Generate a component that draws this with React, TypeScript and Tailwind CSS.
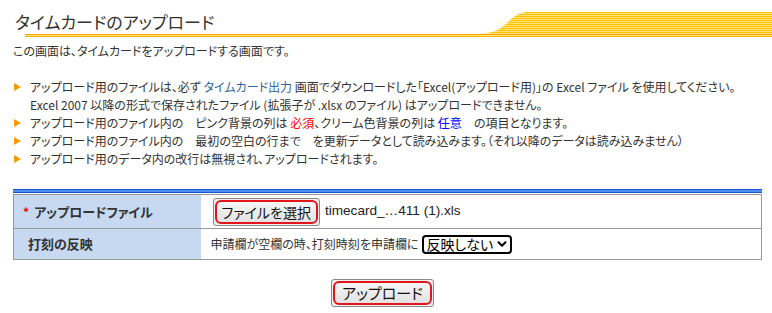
import React from "react";
import { ChevronDown } from "lucide-react";

const jp = "font-['MS_UI_Gothic','Noto_Sans_CJK_JP',sans-serif] [font-feature-settings:'palt']";

// Header band drawn on the right side of the title
function HeaderBand() {
  return (
    <svg className="absolute left-[12px] top-0" width="750" height="37" viewBox="0 0 750 37">
      <defs>
        <pattern id="stripe" width="4" height="2" patternUnits="userSpaceOnUse">
          <rect x="0" y="0" width="4" height="1" fill="#ffc000" />
          <rect x="0" y="1" width="4" height="1" fill="#ffe27a" />
        </pattern>
      </defs>
      <path d="M0,34 L452,34 C468,34 476,29 484,21 C491,14 497,12 504,12 L750,12 L750,37 L0,37 Z" fill="url(#stripe)" />
      <rect x="0" y="34" width="750" height="1" fill="#ffa200" />
      <rect x="0" y="36" width="750" height="1" fill="#ffb000" />
    </svg>
  );
}

function Bullet() {
  return (
    <span className="absolute left-[-16px] top-[5px] w-0 h-0 border-y-[4px] border-y-transparent border-l-[7px] border-l-[#ff9900]" />
  );
}

const notes: React.ReactNode[] = [
  <>
    アップロード用のファイルは、必ず <span className="text-[#336699]">タイムカード出力</span> 画面でダウンロードした「Excel(アップロード用)」の Excel ファイル を使用してください。
    <br />
    Excel 2007 以降の形式で保存されたファイル (拡張子が .xlsx のファイル) はアップロードできません。
  </>,
  <>
    アップロード用のファイル内の　ピンク背景の列は <span className="text-[#ff0000]">必須</span>、クリーム色背景の列は <span className="text-[#0000ff]">任意</span>　の項目となります。
  </>,
  <>アップロード用のファイル内の　最初の空白の行まで　を更新データとして読み込みます。（それ以降のデータは読み込みません）</>,
  <>アップロード用のデータ内の改行は無視され、アップロードされます。</>,
];

export default function App() {
  return (
    <div className={`w-[772px] h-[313px] bg-white text-[#333] pl-[13px] pr-[10px] ${jp}`}>
      {/* Title */}
      <div className="relative h-[37px]">
        <HeaderBand />
        <h1 className="relative pt-[12px] pl-[2px] text-[17px] leading-[20px] font-normal text-[#333]">
          タイムカードのアップロード
        </h1>
      </div>

      <p className="mt-[5px] text-[12px] leading-[18px]">この画面は、タイムカードをアップロードする画面です。</p>

      <ul className="mt-[18px] pl-[17px] text-[12px] leading-[18px]">
        {notes.map((n, i) => (
          <li key={i} className="relative">
            <Bullet />
            {n}
          </li>
        ))}
      </ul>

      {/* Blue rule */}
      <div className="mt-[21px] h-[4px] border-y border-[#1558d6] bg-[#4f8ef0]" />

      <table className="mt-[1px] w-full border-collapse border border-[#999]">
        <tbody>
          <tr className="h-[34px] border-b border-[#999]">
            <th className="w-[187px] bg-[#c6d9f0] text-left pl-[9px] text-[13px] font-bold">
              <span className="text-[#e00] mr-[5px] text-[12px]">*</span>アップロードファイル
            </th>
            <td className="pl-[12px]">
              <div className="flex items-center">
                <span className="inline-flex border border-[#8a8a8a] rounded-[3px] bg-[#efefef] p-[1px]">
                  <span className="border-2 border-[#e4141b] rounded-[6px] px-[5px] text-[14px] leading-[20px] bg-gradient-to-b from-[#f6f6f6] to-[#e2e2e2] text-[#111]">
                    ファイルを選択
                  </span>
                </span>
                <span className="ml-[5px] text-[13.6px] font-['Liberation_Sans',Arial,sans-serif] text-[#222]">
                  timecard_…411 (1).xls
                </span>
              </div>
            </td>
          </tr>
          <tr className="h-[31px]">
            <th className="bg-[#c6d9f0] text-left pl-[14px] text-[13px] font-bold">打刻の反映</th>
            <td className="pl-[10px] text-[12px]">
              <div className="flex items-center">
                申請欄が空欄の時、打刻時刻を申請欄に
                <span className="ml-[4px] inline-flex items-center border-2 border-black rounded-[4px] pl-[2px] pr-[1px] h-[19px] text-[14px] text-black">
                  反映しない
                  <ChevronDown className="w-[14px] h-[14px] ml-[2px]" strokeWidth={3.5} />
                </span>
              </div>
            </td>
          </tr>
        </tbody>
      </table>

      <div className="mt-[19px] flex justify-center pr-[10px]">
        <span className="inline-flex border border-[#8a8a8a] rounded-[3px] bg-[#efefef] p-[1px]">
          <span className="border-2 border-[#e4141b] rounded-[6px] px-[7px] text-[15px] leading-[20px] bg-gradient-to-b from-[#f6f6f6] to-[#e2e2e2] text-[#111]">
            アップロード
          </span>
        </span>
      </div>
    </div>
  );
}
